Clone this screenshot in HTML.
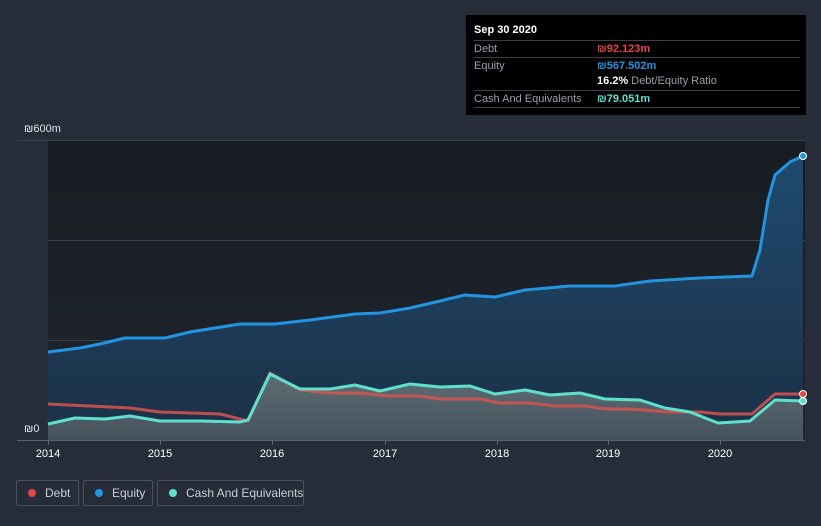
<!DOCTYPE html>
<html><head><style>
html,body{margin:0;width:821px;height:526px;overflow:hidden}
body{background:#262d38;font-family:"Liberation Sans",sans-serif;position:relative}
.tt{position:absolute;left:466px;top:15px;width:340px;height:100px;background:#000;color:#fff;font-size:11px}
.row{position:absolute;left:8px;width:326px;border-top:1px solid #3a3f47;height:16px;line-height:16px}
.lbl{color:#9aa0a8}
.v{position:absolute;left:123px;font-weight:bold}
.leg{position:absolute;top:480px;height:26px;border:1px solid #4a515c;border-radius:2px;color:#c9ced6;font-size:12px;line-height:25px;box-sizing:border-box;white-space:nowrap}
.dot{display:inline-block;width:8px;height:8px;border-radius:50%;margin:0 9px 0 11px}
</style></head><body>
<svg width="821" height="526" style="position:absolute;left:0;top:0">
<defs>
<linearGradient id="pg" x1="0" y1="0" x2="0" y2="1"><stop offset="0" stop-color="#181c23"/><stop offset="1" stop-color="#20262f"/></linearGradient>
<linearGradient id="eg" x1="0" y1="0" x2="0" y2="1"><stop offset="0" stop-color="#1f4a6e"/><stop offset="1" stop-color="#1c3046"/></linearGradient>
<linearGradient id="cg" x1="0" y1="0" x2="0" y2="1"><stop offset="0" stop-color="#5e6d74"/><stop offset="1" stop-color="#46525c"/></linearGradient>
</defs>
<rect x="48" y="140" width="757" height="300" fill="url(#pg)"/>
<g stroke="#3a414c" stroke-width="1"><line x1="17" y1="140.5" x2="805" y2="140.5"/><line x1="48" y1="240.5" x2="805" y2="240.5"/><line x1="48" y1="340.5" x2="805" y2="340.5"/></g>
<path d="M48,352 L80,348 L100,344 L125,338 L165,338 L190,332 L240,324 L275,324 L310,320 L355,314 L380,313 L410,308 L440,301 L465,295 L495,297 L525,290 L570,286 L615,286 L650,281 L700,278 L752,276 L760,250 L768,200 L775,175 L790,162 L803,156 L803,440 L48,440Z" fill="url(#eg)"/>
<path d="M48,424 L75,418 L105,419 L130,416 L160,421 L200,421 L240,422 L248,420 L270,374 L300,389 L330,389 L355,385 L380,391 L410,384 L440,387 L470,386 L495,394 L525,390 L550,395 L580,393 L605,399 L640,400 L665,408 L690,412 L718,423 L750,421 L775,400 L803,401 L803,440 L48,440Z" fill="url(#cg)"/>
<path d="M48,352 L80,348 L100,344 L125,338 L165,338 L190,332 L240,324 L275,324 L310,320 L355,314 L380,313 L410,308 L440,301 L465,295 L495,297 L525,290 L570,286 L615,286 L650,281 L700,278 L752,276 L760,250 L768,200 L775,175 L790,162 L803,156" fill="none" stroke="#2394df" stroke-width="3" stroke-linejoin="round"/>
<path d="M48,404 L130,408 L160,412 L220,414 L248,421 L270,373 L300,390 L330,393 L360,393 L390,396 L420,396 L440,399 L480,399 L500,403 L530,403 L555,406 L585,406 L605,409 L630,409 L670,412 L700,412 L720,414 L752,414 L775,394 L803,394" fill="none" stroke="#d9534f" stroke-width="3" stroke-linejoin="round" opacity=".85"/>
<path d="M48,424 L75,418 L105,419 L130,416 L160,421 L200,421 L240,422 L248,420 L270,374 L300,389 L330,389 L355,385 L380,391 L410,384 L440,387 L470,386 L495,394 L525,390 L550,395 L580,393 L605,399 L640,400 L665,408 L690,412 L718,423 L750,421 L775,400 L803,401" fill="none" stroke="#5fe0cc" stroke-width="3" stroke-linejoin="round"/>
<circle cx="803" cy="156" r="3.5" fill="#2394df" stroke="#fff" stroke-width="1"/>
<circle cx="803" cy="394" r="3.5" fill="#e04848" stroke="#fff" stroke-width="1"/>
<circle cx="803" cy="401" r="3.5" fill="#5fe0cc" stroke="#fff" stroke-width="1"/>
<line x1="17" y1="440.5" x2="805" y2="440.5" stroke="#59606b"/>
<g stroke="#59606b"><line x1="48.5" y1="440" x2="48.5" y2="445"/><line x1="160.5" y1="440" x2="160.5" y2="445"/><line x1="272.5" y1="440" x2="272.5" y2="445"/><line x1="385.5" y1="440" x2="385.5" y2="445"/><line x1="497.5" y1="440" x2="497.5" y2="445"/><line x1="608.5" y1="440" x2="608.5" y2="445"/><line x1="720.5" y1="440" x2="720.5" y2="445"/></g>
<g fill="#fff" font-size="11" font-family="Liberation Sans,sans-serif" text-anchor="middle"><text x="48" y="457">2014</text><text x="160" y="457">2015</text><text x="272" y="457">2016</text><text x="385" y="457">2017</text><text x="497" y="457">2018</text><text x="608" y="457">2019</text><text x="720" y="457">2020</text></g>
<g fill="#dfe3e8" font-size="11" font-family="Liberation Sans,sans-serif"><text x="24" y="132">₪600m</text><text x="24" y="432">₪0</text></g>
</svg>
<div class="tt">
<div style="position:absolute;left:8px;top:9px;font-weight:bold">Sep 30 2020</div>
<div class="row" style="top:25px"><span class="lbl">Debt</span><span class="v" style="color:#e04848">₪92.123m</span></div>
<div class="row" style="top:42px"><span class="lbl">Equity</span><span class="v" style="color:#2394df">₪567.502m</span></div>
<div class="row" style="top:58px;border-top:none"><span class="v">16.2% <span style="color:#9aa0a8;font-weight:normal">Debt/Equity Ratio</span></span></div>
<div class="row" style="top:75px"><span class="lbl">Cash And Equivalents</span><span class="v" style="color:#5fe0cc">₪79.051m</span></div>
<div class="row" style="top:92px;height:0"></div>
</div>
<div class="leg" style="left:16px;width:63px"><span class="dot" style="background:#e04848"></span>Debt</div>
<div class="leg" style="left:83px;width:70px"><span class="dot" style="background:#2394df"></span>Equity</div>
<div class="leg" style="left:157px;width:147px"><span class="dot" style="background:#5fe0cc"></span>Cash And Equivalents</div>
</body></html>
